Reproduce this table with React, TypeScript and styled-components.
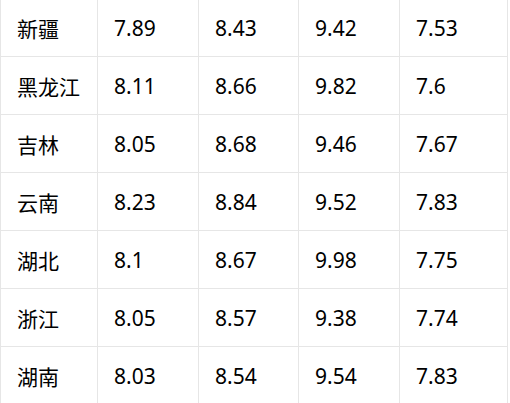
import React from "react";
import styled, { createGlobalStyle } from "styled-components";

const Global = createGlobalStyle`
  html, body { margin: 0; padding: 0; background: #fff; }
  body { overflow: hidden; }
`;

const Viewport = styled.div`
  width: 510px;
  height: 403px;
  overflow: hidden;
  background: #fff;
`;

const Table = styled.table`
  border-collapse: separate;
  border-spacing: 0;
  table-layout: fixed;
  width: 508px;
  margin-top: -1px;
  font-family: "Noto Sans", "Noto Sans CJK SC", sans-serif;
  font-size: 21px;
  color: #000;
`;

const Cell = styled.td<{ $first?: boolean }>`
  box-sizing: border-box;
  height: 58px;
  padding: 0 0 0 16px;
  border-right: 1px solid #e6e6e6;
  border-bottom: 1px solid #e6e6e6;
  border-left: ${(p) => (p.$first ? "1px solid #e6e6e6" : "none")};
  vertical-align: middle;
  white-space: nowrap;
`;

const widths = [98, 101, 100, 101, 108];

const rows: [string, string, string, string, string][] = [
  ["新疆", "7.89", "8.43", "9.42", "7.53"],
  ["黑龙江", "8.11", "8.66", "9.82", "7.6"],
  ["吉林", "8.05", "8.68", "9.46", "7.67"],
  ["云南", "8.23", "8.84", "9.52", "7.83"],
  ["湖北", "8.1", "8.67", "9.98", "7.75"],
  ["浙江", "8.05", "8.57", "9.38", "7.74"],
  ["湖南", "8.03", "8.54", "9.54", "7.83"],
];

export default function App() {
  return (
    <Viewport>
      <Global />
      <Table>
        <colgroup>
          {widths.map((w, i) => (
            <col key={i} style={{ width: w }} />
          ))}
        </colgroup>
        <tbody>
          {rows.map((r) => (
            <tr key={r[0]}>
              {r.map((v, i) => (
                <Cell key={i} $first={i === 0}>
                  {v}
                </Cell>
              ))}
            </tr>
          ))}
        </tbody>
      </Table>
    </Viewport>
  );
}
